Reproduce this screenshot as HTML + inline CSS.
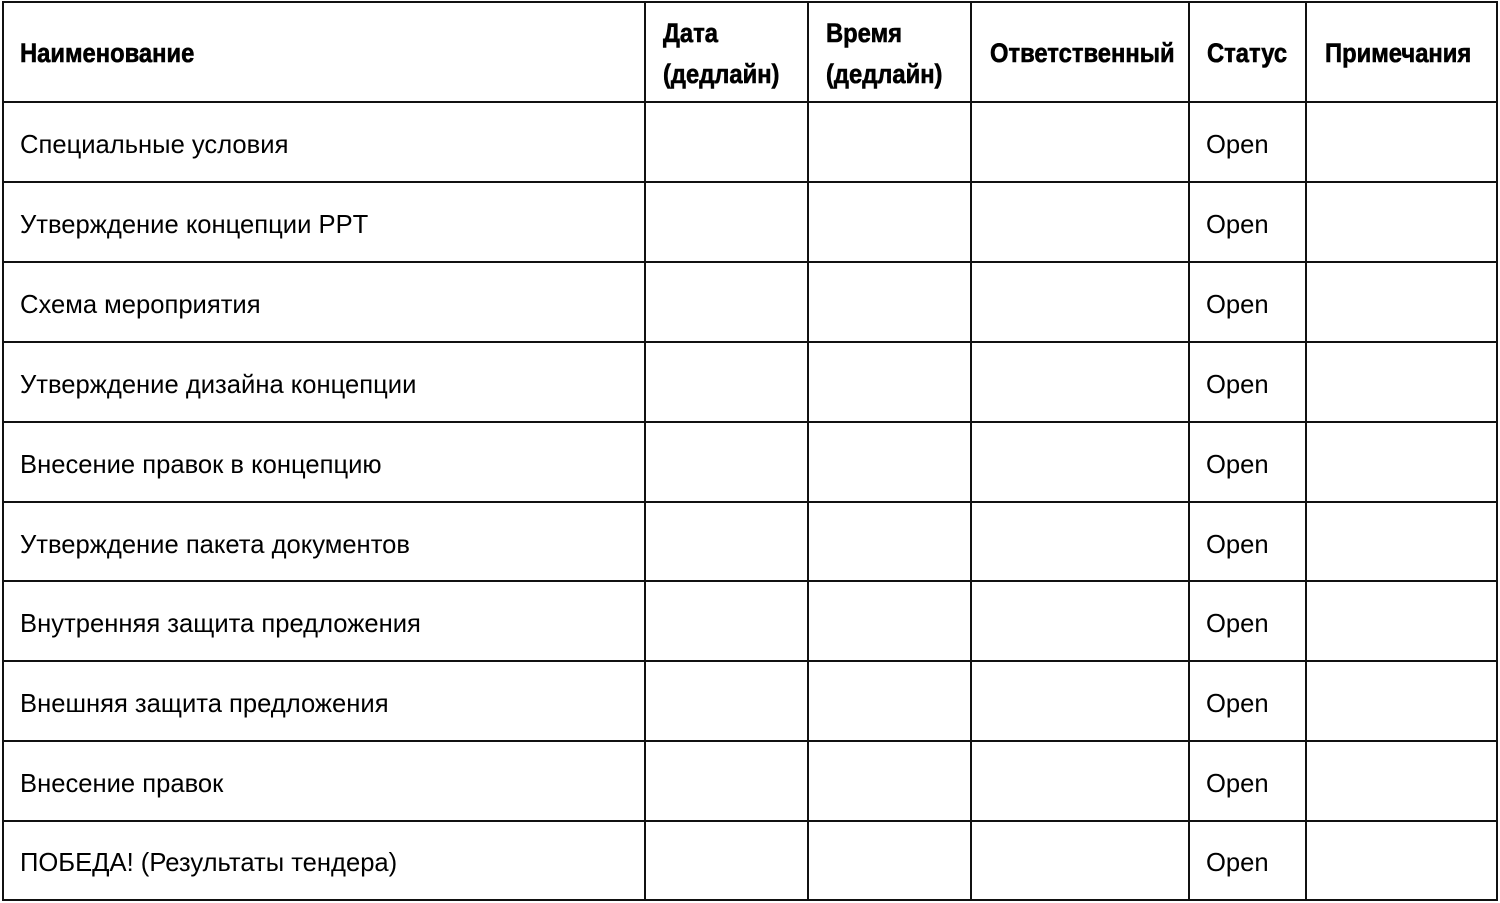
<!DOCTYPE html>
<html><head><meta charset="utf-8"><style>
body{margin:0;width:1500px;height:903px;background:#fff;position:relative;overflow:hidden;font-family:"Liberation Sans",sans-serif;color:#000}
.h{position:absolute;height:2px;background:#111;left:2px;width:1496px}
.v{position:absolute;width:2px;background:#111;top:1px;height:900px}
.t{position:absolute;font-size:25.6px;line-height:30px;white-space:nowrap}
.b{position:absolute;font-family:"Liberation Sans",sans-serif;font-weight:bold;font-size:27px;line-height:41px;white-space:nowrap;transform:scaleX(0.88);transform-origin:left top;-webkit-text-stroke:0.6px #000}
</style></head><body>
<div class="h" style="top:1px"></div>
<div class="h" style="top:101px"></div>
<div class="h" style="top:181px"></div>
<div class="h" style="top:261px"></div>
<div class="h" style="top:341px"></div>
<div class="h" style="top:421px"></div>
<div class="h" style="top:501px"></div>
<div class="h" style="top:580px"></div>
<div class="h" style="top:660px"></div>
<div class="h" style="top:740px"></div>
<div class="h" style="top:820px"></div>
<div class="h" style="top:899px"></div>
<div class="v" style="left:2px"></div>
<div class="v" style="left:644px"></div>
<div class="v" style="left:807px"></div>
<div class="v" style="left:970px"></div>
<div class="v" style="left:1188px"></div>
<div class="v" style="left:1305px"></div>
<div class="v" style="left:1496px"></div>

<div class="b" style="left:20px;top:33px">Наименование</div>
<div class="b" style="left:663px;top:13px">Дата<br>(дедлайн)</div>
<div class="b" style="left:826px;top:13px">Время<br>(дедлайн)</div>
<div class="b" style="left:990px;top:33px">Ответственный</div>
<div class="b" style="left:1207px;top:33px">Статус</div>
<div class="b" style="left:1325px;top:33px">Примечания</div>

<div class="t" style="left:20px;top:130px">Специальные условия</div>
<div class="t" style="left:20px;top:210px">Утверждение концепции PPT</div>
<div class="t" style="left:20px;top:290px">Схема мероприятия</div>
<div class="t" style="left:20px;top:370px">Утверждение дизайна концепции</div>
<div class="t" style="left:20px;top:450px">Внесение правок в концепцию</div>
<div class="t" style="left:20px;top:530px">Утверждение пакета документов</div>
<div class="t" style="left:20px;top:609px">Внутренняя защита предложения</div>
<div class="t" style="left:20px;top:689px">Внешняя защита предложения</div>
<div class="t" style="left:20px;top:769px">Внесение правок</div>
<div class="t" style="left:20px;top:848px">ПОБЕДА! (Результаты тендера)</div>

<div class="t" style="left:1206px;top:130px">Open</div>
<div class="t" style="left:1206px;top:210px">Open</div>
<div class="t" style="left:1206px;top:290px">Open</div>
<div class="t" style="left:1206px;top:370px">Open</div>
<div class="t" style="left:1206px;top:450px">Open</div>
<div class="t" style="left:1206px;top:530px">Open</div>
<div class="t" style="left:1206px;top:609px">Open</div>
<div class="t" style="left:1206px;top:689px">Open</div>
<div class="t" style="left:1206px;top:769px">Open</div>
<div class="t" style="left:1206px;top:848px">Open</div>
</body></html>
